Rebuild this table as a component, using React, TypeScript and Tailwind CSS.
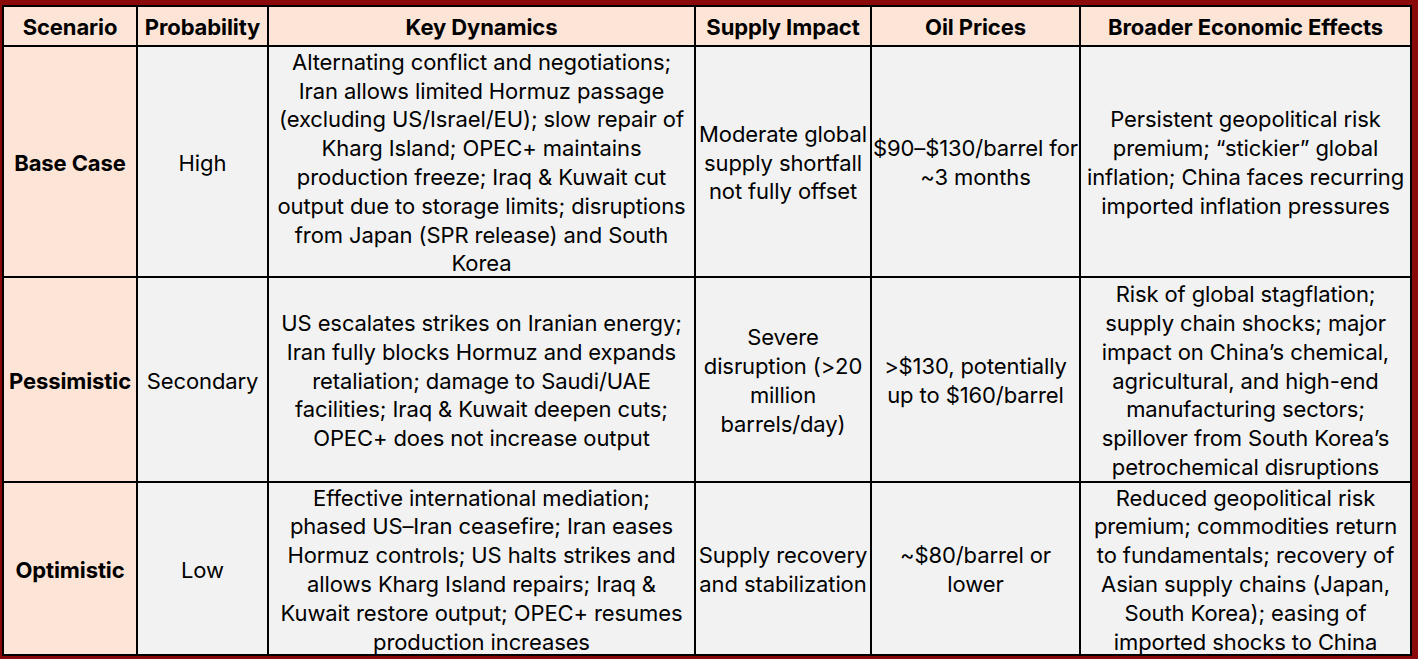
const HEAD = ["Scenario", "Probability", "Key Dynamics", "Supply Impact", "Oil Prices", "Broader Economic Effects"];

const ROWS: { name: string; prob: string; cells: string[][] }[] = [
  {
    name: "Base Case",
    prob: "High",
    cells: [
      [
        "Alternating conflict and negotiations;",
        "Iran allows limited Hormuz passage",
        "(excluding US/Israel/EU); slow repair of",
        "Kharg Island; OPEC+ maintains",
        "production freeze; Iraq & Kuwait cut",
        "output due to storage limits; disruptions",
        "from Japan (SPR release) and South",
        "Korea",
      ],
      ["Moderate global", "supply shortfall", "not fully offset"],
      ["$90–$130/barrel for", "~3 months"],
      [
        "Persistent geopolitical risk",
        "premium; “stickier” global",
        "inflation; China faces recurring",
        "imported inflation pressures",
      ],
    ],
  },
  {
    name: "Pessimistic",
    prob: "Secondary",
    cells: [
      [
        "US escalates strikes on Iranian energy;",
        "Iran fully blocks Hormuz and expands",
        "retaliation; damage to Saudi/UAE",
        "facilities; Iraq & Kuwait deepen cuts;",
        "OPEC+ does not increase output",
      ],
      ["Severe", "disruption (>20", "million", "barrels/day)"],
      [">$130, potentially", "up to $160/barrel"],
      [
        "Risk of global stagflation;",
        "supply chain shocks; major",
        "impact on China’s chemical,",
        "agricultural, and high-end",
        "manufacturing sectors;",
        "spillover from South Korea’s",
        "petrochemical disruptions",
      ],
    ],
  },
  {
    name: "Optimistic",
    prob: "Low",
    cells: [
      [
        "Effective international mediation;",
        "phased US–Iran ceasefire; Iran eases",
        "Hormuz controls; US halts strikes and",
        "allows Kharg Island repairs; Iraq &",
        "Kuwait restore output; OPEC+ resumes",
        "production increases",
      ],
      ["Supply recovery", "and stabilization"],
      ["~$80/barrel or", "lower"],
      [
        "Reduced geopolitical risk",
        "premium; commodities return",
        "to fundamentals; recovery of",
        "Asian supply chains (Japan,",
        "South Korea); easing of",
        "imported shocks to China",
      ],
    ],
  },
];

const Cell = ({ lines, peach, bold }: { lines: string[]; peach?: boolean; bold?: boolean }) => (
  <div
    className={`flex flex-col items-center justify-center border-r-2 border-b-2 border-black text-center whitespace-nowrap overflow-hidden pt-[3px] ${
      peach ? "bg-[#fce4d6]" : "bg-[#f2f2f2]"
    } ${bold ? "font-bold" : ""}`}
  >
    {lines.map((l, i) => (
      <span key={i}>{l}</span>
    ))}
  </div>
);

export default function App() {
  return (
    <div className="w-[1418px] h-[659px] bg-[#8a0a0a] pt-[5px] pl-[2px] pr-[6px] pb-[3px]">
      <div
        className="grid grid-cols-[134px_131px_427px_176px_209px_331px] grid-rows-[40px_231px_205px_173px] border-l-2 border-t-2 border-black text-[22px] leading-[28.8px] text-black tracking-[-0.1px]"
        style={{ fontFamily: "Inter, 'Noto Sans', sans-serif" }}
      >
        {HEAD.map((h) => (
          <Cell key={h} lines={[h]} peach bold />
        ))}
        {ROWS.map((r) => (
          <div key={r.name} className="contents">
            <Cell lines={[r.name]} peach bold />
            <Cell lines={[r.prob]} />
            {r.cells.map((c, i) => (
              <Cell key={i} lines={c} />
            ))}
          </div>
        ))}
      </div>
    </div>
  );
}
